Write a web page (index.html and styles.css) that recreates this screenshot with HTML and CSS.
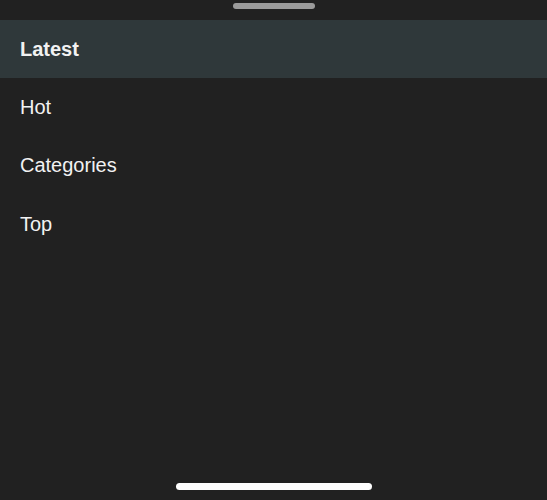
FILE: index.html
```html
<!DOCTYPE html>
<html lang="en">
<head>
<meta charset="utf-8">
<title>Menu</title>
<link rel="stylesheet" href="styles.css">
</head>
<body>
<div class="sheet">
  <div class="grabber-area"><div class="grabber"></div></div>
  <nav class="menu">
    <div class="item active">Latest</div>
    <div class="item">Hot</div>
    <div class="item">Categories</div>
    <div class="item">Top</div>
  </nav>
  <div class="home-area"><div class="home-indicator"></div></div>
</div>
</body>
</html>
```
FILE: styles.css
```css
html, body {
  margin: 0;
  padding: 0;
  background: #212121;
}
body {
  font-family: "Liberation Sans", Arial, sans-serif;
  color: #f2f2f2;
}
.sheet {
  display: flex;
  flex-direction: column;
  height: 500px;
}
.grabber-area {
  height: 20px;
  display: flex;
  justify-content: center;
  padding-top: 3px;
  box-sizing: border-box;
}
.grabber {
  width: 82px;
  height: 6px;
  border-radius: 3px;
  background: #9b9b9b;
}
.menu {
  display: flex;
  flex-direction: column;
}
.item {
  height: 58.5px;
  display: flex;
  align-items: center;
  padding-left: 20px;
  font-size: 20px;
}
.item.active {
  background: #2f383a;
  font-weight: bold;
  height: 58px;
}
.home-area {
  margin-top: auto;
  display: flex;
  justify-content: center;
  padding-bottom: 10px;
}
.home-indicator {
  width: 196px;
  height: 7px;
  border-radius: 4px;
  background: #ffffff;
}
```
